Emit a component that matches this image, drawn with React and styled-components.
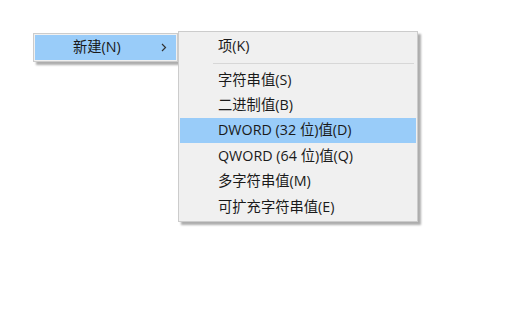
import React from 'react';
import styled, { createGlobalStyle } from 'styled-components';

const GlobalStyle = createGlobalStyle`
  html, body {
    margin: 0;
    padding: 0;
    background: #ffffff;
  }
  body {
    font-family: "Open Sans", "Noto Sans CJK SC", sans-serif;
    color: #000;
  }
`;

const Stage = styled.div`
  width: 521px;
  height: 311px;
  display: flex;
  align-items: flex-start;
  padding: 33px 0 0 33px;
  box-sizing: border-box;
`;

const Menu = styled.div`
  position: relative;
  z-index: ${p => p.$level};
  box-sizing: border-box;
  width: ${p => p.$width}px;
  margin-top: ${p => p.$offset || 0}px;
  padding: ${p => p.$pad};
  background: #f0f0f0;
  border: 1px solid #cccccc;
  box-shadow: 3px 3px 2px rgba(0, 0, 0, 0.32);
`;

const ParentItem = styled.div`
  display: flex;
  align-items: center;
  height: 25px;
  padding: 0 9px 0 38px;
  background: #99ccf9;
`;

const Label = styled.span`
  flex: 1;
  white-space: nowrap;
  font-family: "Open Sans", "Noto Sans CJK SC", sans-serif;
  font-size: 14.3px;
  line-height: 1;
  color: #1a1a1a;
`;

const Chevron = styled.svg`
  width: 6px;
  height: 9px;
  flex: none;
`;

const Item = styled.div`
  display: flex;
  align-items: center;
  height: ${p => p.$h}px;
  padding-left: 38px;
  background: ${p => (p.$active ? '#99ccf9' : 'transparent')};
`;

const Separator = styled.div`
  height: 1px;
  margin: 5px 2px 3px 33px;
  background: #d7d7d7;
`;

const entries = [
  '字符串值(S)',
  '二进制值(B)',
  'DWORD (32 位)值(D)',
  'QWORD (64 位)值(Q)',
  '多字符串值(M)',
  '可扩充字符串值(E)',
];

export default function App() {
  return (
    <>
      <GlobalStyle />
      <Stage>
        <Menu $level={1} $width={145} $pad="1px">
          <ParentItem>
            <Label>新建(N)</Label>
            <Chevron viewBox="0 0 6 9">
              <path d="M1 1 L4.5 4.5 L1 8" fill="none" stroke="#333" strokeWidth="1.2" />
            </Chevron>
          </ParentItem>
        </Menu>
        <Menu $level={2} $width={240} $offset={-2} $pad="2px 1px">
          <Item $h={24}>
            <Label>项(K)</Label>
          </Item>
          <Separator />
          {entries.map(text => (
            <Item key={text} $h={25.4} $active={text.startsWith('DWORD')}>
              <Label>{text}</Label>
            </Item>
          ))}
        </Menu>
      </Stage>
    </>
  );
}
